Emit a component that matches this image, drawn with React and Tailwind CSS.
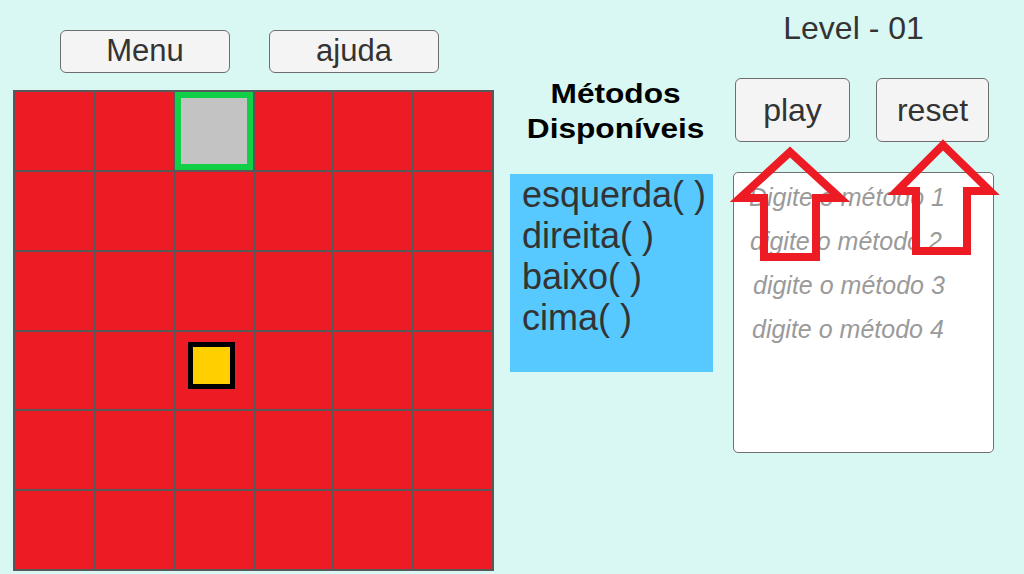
import React from "react";

const ROWS = 6;
const COLS = 6;

function Cell({ r, c }) {
  // start cell (gray with green frame)
  if (r === 0 && c === 2) {
    return <div className="bg-[#c3c3c3] border-[6px] border-[#12cf48]" />;
  }
  // player square
  if (r === 3 && c === 2) {
    return (
      <div className="bg-[#ed1c24] pl-[13px] pt-[10px]">
        <div className="w-[47px] h-[47px] bg-[#ffcf00] border-[5px] border-black" />
      </div>
    );
  }
  return <div className="bg-[#ed1c24]" />;
}

function Btn({ children, className }) {
  return (
    <button
      className={
        "flex items-center justify-center bg-[#f4f4f4] border-[1.5px] border-[#6e6e6e] rounded-[6px] text-[#333]" +
        " " +
        className
      }
    >
      {children}
    </button>
  );
}

export default function App() {
  const cells = [];
  for (let r = 0; r < ROWS; r++) {
    for (let c = 0; c < COLS; c++) {
      cells.push(<Cell key={r + "-" + c} r={r} c={c} />);
    }
  }

  return (
    <div
      className="relative w-[1024px] h-[574px] overflow-hidden bg-[#d9f8f3] flex items-start"
      style={{ fontFamily: '"Liberation Sans", Arial, sans-serif' }}
    >
      {/* Left: menu buttons + board */}
      <div className="flex flex-col pl-[13px] pt-[30px]">
        <div className="flex gap-[39px] ml-[47px]">
          <Btn className="w-[170px] h-[43px] text-[31px]">Menu</Btn>
          <Btn className="w-[170px] h-[43px] text-[31px]">ajuda</Btn>
        </div>
        <div className="mt-[17px] w-[481px] h-[481px] bg-[#595959] p-[2px] grid grid-cols-6 grid-rows-6 gap-[2px]">
          {cells}
        </div>
      </div>

      {/* Middle: available methods */}
      <div className="ml-[16px] w-[203px] flex flex-col">
        <div className="mt-[76px] flex justify-center pl-[8px]">
          <div className="text-center text-black font-bold text-[28px] leading-[35px] scale-x-[1.13]">
            Métodos
            <br />
            Disponíveis
          </div>
        </div>
        <div className="mt-[28px] h-[198px] bg-[#57c9ff] pl-[12px] text-[#333] text-[36px] leading-[41px]">
          <div>esquerda( )</div>
          <div>direita( )</div>
          <div>baixo( )</div>
          <div>cima( )</div>
        </div>
      </div>

      {/* Right: level, controls, input */}
      <div className="ml-[20px] w-[261px] flex flex-col">
        <div className="pt-[8px] h-[48px] pr-[20px] text-center text-[#333] text-[32px] leading-[40px]">
          Level - 01
        </div>
        <div className="mt-[30px] flex gap-[26px] pl-[2px]">
          <Btn className="w-[115px] h-[64px] text-[32px]">play</Btn>
          <Btn className="w-[113px] h-[64px] text-[32px]">reset</Btn>
        </div>
        <div className="mt-[30px] h-[281px] bg-white border border-[#707070] rounded-[5px] pt-[2px] italic text-[#9a9a9a] text-[25px] leading-[44px]">
          <div className="pl-[15px]">Digite o método 1</div>
          <div className="pl-[16px]">digite o método 2</div>
          <div className="pl-[19px]">digite o método 3</div>
          <div className="pl-[18px]">digite o método 4</div>
        </div>
      </div>

      {/* annotation arrows */}
      <svg
        className="absolute inset-0 pointer-events-none"
        width="1024"
        height="574"
        viewBox="0 0 1024 574"
      >
        <polygon
          points="790,152 840,198 816,198 816,257 764,257 764,198 740,198"
          fill="none"
          stroke="#ed1c24"
          strokeWidth="8"
          strokeLinejoin="miter"
        />
        <polygon
          points="943,145 990,191 967,191 967,251 916,251 916,191 897,191"
          fill="none"
          stroke="#ed1c24"
          strokeWidth="8"
          strokeLinejoin="miter"
        />
      </svg>
    </div>
  );
}
